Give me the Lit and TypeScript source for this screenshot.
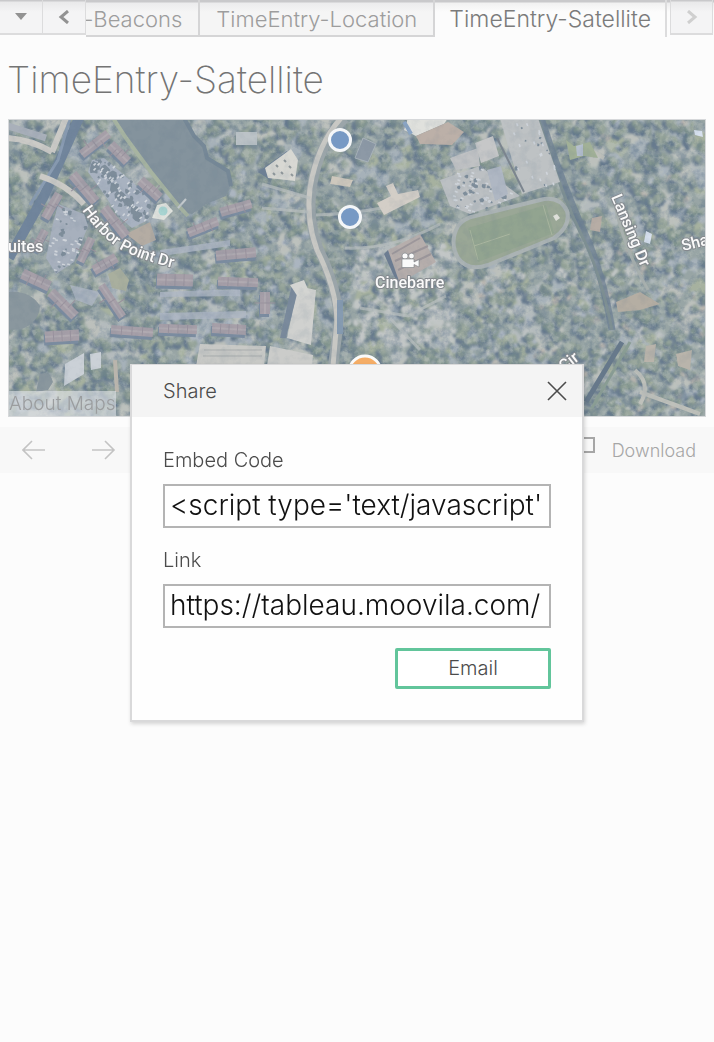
import { LitElement, html, svg, css } from "lit";
import { customElement, property, state } from "lit/decorators.js";

type Pt = [number, number];

/* Small seeded generator so the terrain is identical on every render. */
function seeded(seed: number) {
  return () => {
    seed = (seed + 0x6d2b79f5) | 0;
    let t = Math.imul(seed ^ (seed >>> 15), 1 | seed);
    t = (t + Math.imul(t ^ (t >>> 7), 61 | t)) ^ t;
    return ((t ^ (t >>> 14)) >>> 0) / 4294967296;
  };
}

const n = (v: number) => v.toFixed(1);

function blob(rnd: () => number, x: number, y: number, r: number): string {
  const count = 9;
  let d = "";
  for (let i = 0; i < count; i++) {
    const a = (i / count) * Math.PI * 2;
    const k = r * (0.7 + rnd() * 0.6);
    d += `${i ? "L" : "M"}${n(x + Math.cos(a) * k)} ${n(y + Math.sin(a) * k)}`;
  }
  return d + "Z";
}

function box(x: number, y: number, w: number, h: number, deg: number): string {
  const a = (deg * Math.PI) / 180;
  const c = Math.cos(a), s = Math.sin(a);
  const p = ([u, v]: Pt) => `${n(x + u * c - v * s)} ${n(y + u * s + v * c)}`;
  return `M${p([-w / 2, -h / 2])}L${p([w / 2, -h / 2])}L${p([w / 2, h / 2])}L${p([-w / 2, h / 2])}Z`;
}

function inside(x: number, y: number, poly: Pt[]): boolean {
  let hit = false;
  for (let i = 0, j = poly.length - 1; i < poly.length; j = i++) {
    const [xi, yi] = poly[i], [xj, yj] = poly[j];
    if (yi > y !== yj > y && x < ((xj - xi) * (y - yi)) / (yj - yi) + xi) hit = !hit;
  }
  return hit;
}

const LAKE: Pt[] = [[113, 118], [184, 118], [194, 136], [204, 146], [207, 158], [228, 171], [231, 184], [226, 196], [206, 204], [192, 214], [184, 212], [176, 203], [164, 190], [151, 172], [137, 155], [126, 138]];
const LOT: Pt[] = [[92, 160], [104, 158], [138, 187], [150, 200], [148, 220], [132, 228], [118, 216], [104, 194], [88, 172]];
const LOT2: Pt[] = [[58, 204], [84, 214], [88, 226], [74, 262], [56, 274], [46, 258], [52, 228]];
const PLAZA: Pt[] = [[500, 118], [538, 118], [560, 182], [522, 194]];
const YARD: Pt[] = [[440, 180], [480, 166], [520, 196], [470, 214], [450, 206]];
const CLEAR: Pt[][] = [LAKE, LOT, LOT2, PLAZA, YARD];
const path = (p: Pt[]) => "M" + p.map((q) => q.join(" ")).join("L") + "Z";

function terrain() {
  const rnd = seeded(41);
  const layers: { d: string; fill: string }[] = [];
  const open = (x: number, y: number) => !CLEAR.some((p) => inside(x, y, p));

  const grounds = ["#b4bbbd", "#a6b19f", "#bcc0bc", "#a6b1b9"];
  for (const fill of grounds) {
    let d = "";
    for (let i = 0; i < 170; i++) {
      const x = 8 + rnd() * 698, y = 118 + rnd() * 300;
      if (open(x, y)) d += blob(rnd, x, y, 5 + rnd() * 8);
    }
    layers.push({ d, fill });
  }

  const tones = ["#82938f", "#8b9b95", "#7d8f90", "#91a096", "#82958e"];
  for (const tone of tones) {
    let shade = "", crown = "", tip = "";
    for (let i = 0; i < 340; i++) {
      const x = 8 + rnd() * 698, y = 118 + rnd() * 300;
      if (!open(x, y)) continue;
      const r = 2.6 + rnd() * 4;
      shade += blob(rnd, x - 2, y + 2, r + 0.3);
      crown += blob(rnd, x, y, r);
      tip += blob(rnd, x + 1, y - 1, r * 0.55);
    }
    layers.push({ d: shade, fill: "#6b7d90" }, { d: crown, fill: tone }, { d: tip, fill: "#9ba89e" });
  }

  let white = "", slate = "", tan = "";
  for (let i = 0; i < 230; i++) {
    const x = 470 + rnd() * 236, y = i % 3 ? 250 + rnd() * 160 : 120 + rnd() * 200;
    if (x < 580 && y < 265) continue;
    const b = box(x, y, 3 + rnd() * 6, 2 + rnd() * 4, rnd() > 0.5 ? 28 : -55);
    const pick = rnd();
    if (pick < 0.3) white += b;
    else if (pick < 0.75) slate += b;
    else tan += b;
  }
  for (let i = 0; i < 190; i++) {
    const x = 355 + rnd() * 100, y = 245 + rnd() * 100;
    white += blob(rnd, x, y, 1.5 + rnd() * 3);
  }
  for (let i = 0; i < 130; i++) {
    const x = 150 + rnd() * 160, y = 170 + rnd() * 190;
    if (open(x, y)) slate += blob(rnd, x, y, 1.5 + rnd() * 3);
  }
  layers.push({ d: slate, fill: "#abb5c0" }, { d: tan, fill: "#b8b4ae" }, { d: white, fill: "#c2c6c6" });
  return layers;
}

function cars() {
  const rnd = seeded(9);
  let light = "", dark = "";
  const put = (poly: Pt[], total: number, deg: number, x0: number, y0: number, w: number, h: number) => {
    for (let i = 0; i < total; i++) {
      const x = x0 + rnd() * w, y = y0 + rnd() * h;
      if (!inside(x, y, poly)) continue;
      if (rnd() < 0.6) light += box(x, y, 3, 1.6, deg);
      else dark += blob(rnd, x, y, 0.8 + rnd() * 1.8);
    }
  };
  put(LOT, 190, -45, 86, 156, 66, 74);
  put(LOT2, 90, 15, 44, 202, 48, 74);
  put(PLAZA, 60, 70, 498, 118, 64, 78);
  put(YARD, 130, 20, 438, 164, 84, 52);
  for (const [x, y] of [[104, 170], [112, 176], [96, 166], [120, 196], [134, 210], [128, 202], [114, 188], [138, 216]]) dark += blob(rnd, x, y, 5);
  return { light, dark };
}

const LAYERS = terrain();
const CARS = cars();

/* Roof segments: centre x, centre y, length, depth, angle. */
const ROOFS: number[][] = [
  [95, 144, 34, 9, -38], [119, 153, 24, 10, 45], [150, 189, 26, 10, 42], [84, 188, 36, 10, 50], [115, 222, 36, 10, 52],
  [52, 206, 28, 9, -60], [105, 264, 26, 10, -30], [86, 250, 26, 8, -64], [36, 280, 30, 11, 25], [40, 240, 22, 8, -62],
  [203, 227, 32, 9, -22], [236, 208, 32, 9, -16], [236, 254, 40, 10, -5], [175, 280, 36, 12, 2], [238, 282, 40, 9, 2],
  [63, 304, 34, 10, 45], [112, 301, 38, 8, 56], [62, 336, 34, 11, -3], [132, 331, 42, 9, 4], [178, 329, 38, 9, 2],
  [229, 329, 34, 10, 3], [265, 303, 22, 10, -90],
];

@customElement("satellite-map")
export class SatelliteMap extends LitElement {
  static styles = css`
    :host { display: block; position: relative; overflow: hidden; border: 1px solid #d6d8da; height: 296px; }
    .canvas { display: block; width: 100%; height: 100%; }
    .label { font-family: Roboto, "Liberation Sans", sans-serif; font-size: 16px; font-weight: 500; fill: #fafafa; stroke: #85898e; stroke-width: 2px; paint-order: stroke; stroke-linejoin: round; }
    .about { position: absolute; left: 0; bottom: 0; font-size: 19px; line-height: 25px; color: #9b9d9f; background: rgba(225, 229, 233, 0.6); text-decoration: none; font-weight: 300; }
  `;

  render() {
    return html`
      <svg class="canvas" viewBox="9 120 696 296" preserveAspectRatio="xMidYMid slice" role="img" aria-label="Satellite map">
        <defs>
          <filter id="dark-grain" x="0" y="0" width="100%" height="100%" color-interpolation-filters="sRGB">
            <feTurbulence type="fractalNoise" baseFrequency="0.1" numOctaves="4" seed="4" />
            <feColorMatrix values="0 0 0 0 0.36  0 0 0 0 0.45  0 0 0 0 0.54  3 0 0 0 -1.300" />
          </filter>
          <filter id="light-grain" x="0" y="0" width="100%" height="100%" color-interpolation-filters="sRGB">
            <feTurbulence type="fractalNoise" baseFrequency="0.14" numOctaves="4" seed="15" />
            <feColorMatrix values="0 0 0 0 0.74  0 0 0 0 0.77  0 0 0 0 0.75  4 0 0 0 -1.900" />
          </filter>
          <filter id="canopy" color-interpolation-filters="sRGB"><feGaussianBlur stdDeviation="1" /></filter>
          <filter id="soft" color-interpolation-filters="sRGB"><feGaussianBlur stdDeviation="0.7" /></filter>
          <path id="harbor" d="M82 210 Q104 242 126 252 Q146 262 190 272" />
        </defs>
        <rect x="8" y="118" width="700" height="300" fill="#98a5a5" />
        <g filter="url(#canopy)">
          ${LAYERS.map((l) => svg`<path d=${l.d} fill=${l.fill} />`)}
        </g>
        <rect x="8" y="118" width="700" height="300" filter="url(#dark-grain)" opacity="0.4" />
        <rect x="8" y="118" width="700" height="300" filter="url(#light-grain)" opacity="0.45" />
        <g filter="url(#soft)">
          <path d="M79 118 L44 196 L9 258" fill="none" stroke="#71859c" stroke-width="10" />
          <path d="M70 118 L58 160 L30 205" fill="none" stroke="#8a9cb2" stroke-width="3" />
          <path d="M8 138 Q32 140 52 152 M66 118 L52 152 M40 176 Q66 184 84 204" fill="none" stroke="#cbcac6" stroke-width="6" />
          <path d="M8 126 L46 138" stroke="#a9b0ba" stroke-width="7" />
          <path d="M345 118 Q319 142 312 186 Q307 220 319 250 Q337 288 339 320 L333 366" fill="none" stroke="#9ba5a9" stroke-width="10" />
          <path d="M341 118 Q317 145 310 188 Q306 220 317 250 Q336 288 337 320 L333 366" fill="none" stroke="#c8c8c4" stroke-width="5" />
          <path d="M340 300 V334" stroke="#869bb1" stroke-width="6" />
          <path d="M316 215 Q350 214 388 207 M262 184 L310 198 M262 208 L308 212 M345 248 Q392 250 440 224 M390 318 L420 350 M360 308 L408 316 L446 296" fill="none" stroke="#bbc0c0" stroke-width="3" opacity="0.7" />
          <path d="M541 118 Q563 186 584 232 Q602 270 612 330" fill="none" stroke="#6c7f93" stroke-width="7" opacity="0.7" />
          <path d="M538 118 Q560 190 580 232 Q600 270 612 330" fill="none" stroke="#7f9093" stroke-width="3" />
          <path d="M622 342 L586 402" stroke="#67798b" stroke-width="5" />
          <path d="M630 342 L592 408" stroke="#8a9d94" stroke-width="3" />
          <path d="M635 370 Q652 384 640 404 M640 392 L700 414 M590 150 L604 158" fill="none" stroke="#bfc1bb" stroke-width="4" />
          <path d="M614 198 Q620 240 648 290" fill="none" stroke="#a8b0ae" stroke-width="3" />

          <path d=${path(LAKE)} fill="#84939d" />
          <path d="M113 118 L126 138 L151 172 L176 203 L188 216" fill="none" stroke="#a7b4a1" stroke-width="4" />
          <path d="M184 118 L194 136 L204 146 L207 158 L228 171 L231 186" fill="none" stroke="#768897" stroke-width="4" />
          <path d="M8 292 Q30 290 40 306 Q39 322 22 329 L8 330Z M40 374 Q50 370 53 382 L48 390 L36 392Z" fill="#8a979e" />
          <path d=${path(LOT)} fill="#a8b2c0" />
          <path d=${path(LOT2)} fill="#a7b0bd" />
          <path d="M160 250 L230 240 L230 246 L162 256Z M160 292 L240 289 V296 L160 297Z M160 313 L246 311 V318 L160 320Z M70 285 L100 292 L92 306 L76 300Z" fill="#aeb7c4" opacity="0.8" />
          <path d=${path(PLAZA)} fill="#bec2c4" />
          <path d=${path(YARD)} fill="#bcc0c3" />
          <path d="M126 234 L150 222 L156 240 L142 246Z" fill="#b4aca3" />
          <path d="M108 274 L120 268 L129 280 L126 291 L112 288Z" fill="#a9af9e" />
          <path d=${CARS.dark} fill="#7f8e9b" />
          <path d=${CARS.light} fill="#d0d5db" />

          ${ROOFS.map(([x, y, w, h, a]) => svg`
            <path d=${box(x - 1, y + 3, w, h, a)} fill="#7b8ca0" />
            <path d=${box(x, y, w, h, a)} fill="#a69fa8" />
            <path d=${box(x, y, w, 2, a)} fill="#b0aab1" />
            <path d=${box(x, y, 1, h, a) + box(x + w / 4, y, 1, h, a) + box(x - w / 4, y, 1, h, a)} fill="#99939e" />`)}

          <path d="M152 218 L157 205 L166 203 L173 211 L164 220Z" fill="#dfe2dd" />
          <circle cx="163" cy="211" r="4.5" fill="#a8d4d1" />
          <path d="M178 208 L186 199" stroke="#c3c9cc" stroke-width="2" />

          <path d="M258 172 L287 151 L292 160 L270 180Z" fill="#6f8196" />
          <path d="M265 168 L291 149 L298 160 L295 181 L268 178Z" fill="#d8d8d3" />
          <path d="M276 165l2 2M284 160l2 2M289 166l2 2M281 172l2 2M273 173l2 2M291 174l2 2" stroke="#8f979a" stroke-width="2" />
          <path d="M236 132 H257 V145 H236Z" fill="#bcc3c7" />
          <path d="M363 138 L376 144 L368 162 L355 158Z" fill="#8d99a6" stroke="#a9b3ba" />
          <path d="M332 176 L353 180 L350 187 L330 184Z" fill="#cec8bd" />
          <path d="M377 203 L391 196 L386 186 L393 183 L398 194 L418 190 L420 197 L384 215Z" fill="#d3cec7" />
          <path d="M408 118 L448 118 L444 124 L416 136 L404 130Z" fill="#e0e1dd" />
          <path d="M416 136 L448 122 L464 132 L452 145 L420 144Z" fill="#bcb0a8" />
          <path d="M404 122 Q408 128 411 134" fill="none" stroke="#8ba5c5" stroke-width="4" />
          <path d="M450 158 L478 148 L480 166 L456 170Z" fill="#c0c2c4" />
          <path d="M475 143 L493 136 L499 156 L481 163Z" fill="#c6c7c8" />
          <path d="M487 170 L501 166 L508 194 L495 201Z" fill="#afb7c3" />
          <path d="M497 138 L524 192" stroke="#7c858f" stroke-width="2" />

          <path d="M388 250 L420 234 L436 262 L398 284Z" fill="#b6aeac" />
          <path d="M392 254 L420 238 M395 261 L428 246 M398 270 L431 254" stroke="#9d979b" stroke-width="2" />
          <path d="M388 250 L400 284 L394 276 L384 254Z" fill="#6d7d92" />

          <path d="M458 226 Q449 242 458 258 Q468 272 488 265 L554 238 Q571 226 567 211 Q559 195 540 200 L475 216 Q464 218 458 226Z" fill="#9aa796" stroke="#abb3b4" stroke-width="4" />
          <path d="M468 228 L546 205 L554 233 L478 262Z" fill="#92a490" />
          <path d="M474 246 L510 234 M543 205 L552 235 M470 230 L478 260" stroke="#a9b59f" stroke-width="1" />
          <path d="M553 216l4 -2 3 4 -4 3z" fill="#dedfd9" />
          <path d="M566 140 L574 146 L590 142 L598 158 L584 156 L570 160Z" fill="#a1b097" />
          <path d="M576 146 L583 144 V156 L577 156Z" fill="#b5bfce" />

          <path d="M298 286 L316 290 L311 345 L287 338Z" fill="#d0d1cf" />
          <path d="M292 284 L299 286 L286 338 L280 338Z" fill="#7a8a9c" />
          <path d="M200 344 L266 346 L264 366 H196Z" fill="#c8c9c6" />
          <path d="M270 346 L313 355 L312 366 H267Z" fill="#cbccca" />
          <path d="M204 350 H262 M203 356 H262" stroke="#a9adad" stroke-width="1" />
          <path d="M290 285 L304 280 L310 294 L300 300Z" fill="#d4d5d2" />
          <path d="M65 364 L84 353 L84 374 L64 386Z M90 354 L101 352 V368 L91 370Z" fill="#cbd1d7" />
          <path d="M115 360 L117 392" stroke="#bab5ad" stroke-width="4" />
          <path d="M616 302 L640 292 L660 304 L640 310 L618 312Z" fill="#b5aea3" />
          <path d="M646 346 L656 344 L654 362 L644 362Z M676 354 L692 350 L690 370 L678 366Z" fill="#b9b4ab" />
          <path d="M592 218 L602 216 L600 232 L590 230Z" fill="#b7ada5" />
          <path d="M646 231 L652 234 L650 244 L644 242Z M694 130 l8 1 1 6 -8 -2z" fill="#d7e0ee" />
        </g>
        <rect x="8" y="118" width="700" height="300" filter="url(#dark-grain)" opacity="0.1" />

        <text class="label"><textPath href="#harbor">Harbor Point Dr</textPath></text>
        <text class="label" x="8" y="252">uites</text>
        <text class="label" x="375" y="288">Cinebarre</text>
        <text class="label" transform="translate(611 197) rotate(67)">Lansing Dr</text>
        <text class="label" transform="translate(683 251) rotate(-14)">Sha</text>
        <text class="label" transform="translate(564 372) rotate(-38)">Cir</text>

        <g fill="#fafafa" stroke="#7b7f84" stroke-width="0.6">
          <circle cx="405" cy="256" r="3" /><circle cx="411.500" cy="256" r="2.800" />
          <path d="M402 259 H414 V262 L419 259.500 V267 L414 264.500 V267.500 H402Z" />
        </g>
        <circle cx="340" cy="140" r="10.500" fill="#7799c4" stroke="#f4f6f8" stroke-width="3" />
        <circle cx="350" cy="217" r="10.500" fill="#7799c4" stroke="#f4f6f8" stroke-width="3" />
        <circle cx="365" cy="372" r="16" fill="#f5ad66" stroke="#fafafa" stroke-width="3" />
      </svg>
      <a class="about" href="#maps">About Maps</a>
    `;
  }
}

@customElement("share-dialog")
export class ShareDialog extends LitElement {
  @property() embed = "";
  @property() link = "";

  static styles = css`
    :host { display: block; box-sizing: border-box; width: 454px; max-width: 100%; background: #fefefe; border: 2px solid #d9d9da; border-top-width: 1px; box-shadow: 1px 2px 4px rgba(0, 0, 0, 0.16); color: #4b4b4b; font-weight: 300; }
    .head { display: flex; align-items: center; justify-content: space-between; height: 52px; padding: 0 15px 0 31px; background: #f4f4f4; }
    .title { margin: 0; font-size: 20px; font-weight: 300; }
    .close { display: grid; padding: 0; border: 0; background: none; color: #4b4b4b; }
    .body { display: grid; padding: 27px 31px 31px; }
    .caption { font-size: 20px; line-height: 32px; }
    .field { box-sizing: border-box; width: 100%; height: 44px; margin: 8px 0 16px; padding: 0 5px 2px; border: 2px solid #b4b4b4; border-radius: 0; background: #fff; color: #111; font: inherit; font-size: 28px; outline: 0; }
    .email { justify-self: end; width: 156px; height: 41px; margin-top: 4px; padding: 0 0 2px; border: 3px solid #62c59b; border-radius: 2px; background: #fff; color: #4b4b4b; font: inherit; font-size: 20px; }
  `;

  render() {
    return html`
      <header class="head">
        <h2 class="title">Share</h2>
        <button class="close" aria-label="Close" @click=${() => this.dispatchEvent(new CustomEvent("close"))}>
          <svg width="20" height="20" viewBox="0 0 20 20" fill="none" stroke="currentColor" stroke-width="1.600"><path d="M1 1L19 19M19 1L1 19" /></svg>
        </button>
      </header>
      <div class="body">
        <label class="caption" for="embed">Embed Code</label>
        <input class="field" id="embed" type="text" readonly .value=${this.embed} />
        <label class="caption" for="link">Link</label>
        <input class="field" id="link" type="text" readonly .value=${this.link} />
        <button class="email">Email</button>
      </div>
    `;
  }
}

@customElement("app-root")
export class AppRoot extends LitElement {
  @state() private sharing = true;

  private tabs = ["TimeEntry-Beacons", "TimeEntry-Location", "TimeEntry-Satellite"];

  static styles = css`
    :host { display: flex; flex-direction: column; position: relative; min-height: 100vh; background: #fcfcfc; color: #747474; font-family: Inter, "Open Sans", "Liberation Sans", sans-serif; font-weight: 300; }
    .tabs { display: flex; align-items: flex-start; height: 37px; padding-right: 1px; background: linear-gradient(#c9c9cb 0 2px, #ececed 3px, #fcfcfc 12px); }
    .nudge { display: grid; place-items: center; flex: none; box-sizing: border-box; width: 43px; height: 35px; padding: 0; border: solid #dcdcdd; border-width: 0 1px 2px 0; background: linear-gradient(#c9c9cb 0 1px, #e9e9ea 2px, #f4f4f5 12px); color: #929292; }
    .nudge.next { border-left-width: 1px; color: #cfcfcf; margin-left: 3px; }
    .strip { display: flex; flex: 1; justify-content: flex-end; min-width: 0; overflow: hidden; border-right: 2px solid #dcdcdd; }
    .tab { flex: none; box-sizing: border-box; height: 37px; padding: 2px 16px 0; border: solid #d5d5d6; border-width: 0 2px 2px 0; background: linear-gradient(#c9c9cb 0 2px, #ececed 3px, #f5f5f5 12px); color: #9d9d9d; font: inherit; font-size: 22px; }
    .tab.current { border-right: 0; border-bottom: 0; padding: 2px 14px; font-size: 23px; background: linear-gradient(#c9c9cb 0 2px, #f1f1f1 3px, #fcfcfc 12px); color: #7b7b7b; }
    .title { margin: 0; padding: 20px 7px 16px; font-size: 37px; line-height: 46px; font-weight: 200; }
    .map { margin: 0 8px; }
    .toolbar { display: flex; align-items: center; justify-content: space-between; height: 46px; margin-top: 10px; padding: 0 18px 0 22px; background: #f8f8f8; color: #a6a6a6; }
    .group { display: flex; align-items: center; gap: 46px; }
    .group.end { gap: 17px; }
    .tool { display: grid; padding: 0; border: 0; background: none; color: inherit; font: inherit; font-size: 18px; }
    .faint { color: #c3c3c3; }
    .overlay { position: absolute; inset: 0; display: flex; flex-direction: column; align-items: center; padding-top: 364px; }
  `;

  render() {
    return html`
      <nav class="tabs" aria-label="Sheets">
        <button class="nudge" aria-label="All sheets">
          <svg width="14" height="8" viewBox="0 0 14 8" fill="currentColor"><path d="M1 0H13L7 7Z" /></svg>
        </button>
        <button class="nudge" aria-label="Previous sheet">
          <svg width="12" height="14" viewBox="0 0 12 14" fill="none" stroke="currentColor" stroke-width="3"><path d="M10 1L3 7L10 13" /></svg>
        </button>
        <div class="strip">
          ${this.tabs.map((t, i) => html`<button class=${i === 2 ? "tab current" : "tab"}>${t}</button>`)}
        </div>
        <button class="nudge next" aria-label="Next sheet">
          <svg width="12" height="14" viewBox="0 0 12 14" fill="none" stroke="currentColor" stroke-width="3"><path d="M2 1L9 7L2 13" /></svg>
        </button>
      </nav>
      <h1 class="title">TimeEntry-Satellite</h1>
      <satellite-map class="map"></satellite-map>
      <div class="toolbar">
        <div class="group">
          <button class="tool faint" aria-label="Undo">
            <svg width="24" height="20" viewBox="0 0 24 20" fill="none" stroke="currentColor" stroke-width="1.600"><path d="M23 10H1M10 1L1 10L10 19" /></svg>
          </button>
          <button class="tool faint" aria-label="Redo">
            <svg width="24" height="20" viewBox="0 0 24 20" fill="none" stroke="currentColor" stroke-width="1.600"><path d="M0 10H22M13 1L22 10L13 19" /></svg>
          </button>
        </div>
        <div class="group end">
          <button class="tool" aria-label="Share" @click=${() => (this.sharing = true)}>
            <svg width="20" height="26" viewBox="0 0 20 26" fill="none" stroke="currentColor" stroke-width="2"><path d="M6 1H19V15H6" /></svg>
          </button>
          <button class="tool">Download</button>
        </div>
      </div>
      ${this.sharing
        ? html`<div class="overlay">
            <share-dialog
              role="dialog"
              aria-label="Share"
              .embed=${"<script type='text/javascript'"}
              .link=${"https://tableau.moovila.com/"}
              @close=${() => (this.sharing = false)}
            ></share-dialog>
          </div>`
        : null}
    `;
  }
}
